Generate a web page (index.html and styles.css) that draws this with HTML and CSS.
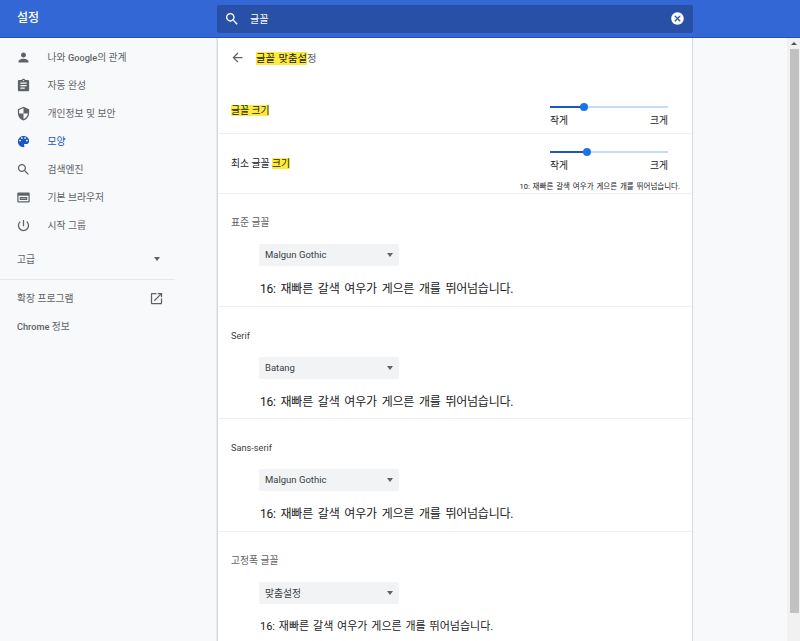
FILE: index.html
```html
<!DOCTYPE html>
<html lang="ko">
<head>
<meta charset="utf-8">
<title>설정</title>
<link rel="stylesheet" href="styles.css">
</head>
<body>
<header class="topbar">
  <h1 class="brand">설정</h1>
  <div class="search">
    <svg class="search-icon" viewBox="0 0 24 24"><path d="M15.5 14h-.79l-.28-.27C15.41 12.59 16 11.11 16 9.5 16 5.91 13.09 3 9.5 3S3 5.91 3 9.5 5.91 16 9.5 16c1.61 0 3.09-.59 4.23-1.57l.27.28v.79l5 4.99L20.49 19l-4.99-5zm-6 0C7.01 14 5 11.99 5 9.5S7.01 5 9.5 5 14 7.01 14 9.5 11.99 14 9.5 14z"/></svg>
    <span class="query">글꼴</span>
    <svg class="clear-icon" viewBox="0 0 24 24"><path d="M12 2C6.47 2 2 6.47 2 12s4.47 10 10 10 10-4.47 10-10S17.53 2 12 2zm5 13.59L15.59 17 12 13.41 8.41 17 7 15.59 10.59 12 7 8.41 8.41 7 12 10.59 15.59 7 17 8.41 13.41 12 17 15.59z"/></svg>
  </div>
</header>
<div class="layout">
  <nav class="sidebar">
    <a class="nav-item"><svg class="icon" viewBox="0 0 24 24"><path d="M12 12c2.21 0 4-1.79 4-4s-1.79-4-4-4-4 1.79-4 4 1.79 4 4 4zm0 2c-2.67 0-8 1.34-8 4v2h16v-2c0-2.66-5.33-4-8-4z"/></svg><span>나와 <span class="latin">Google</span>의 관계</span></a>
    <a class="nav-item"><svg class="icon" viewBox="0 0 24 24"><path d="M19 3h-4.18C14.4 1.84 13.3 1 12 1c-1.3 0-2.4.84-2.82 2H5c-1.1 0-2 .9-2 2v14c0 1.1.9 2 2 2h14c1.1 0 2-.9 2-2V5c0-1.1-.9-2-2-2zm-7 0c.55 0 1 .45 1 1s-.45 1-1 1-1-.45-1-1 .45-1 1-1zm2 14H7v-2h7v2zm3-4H7v-2h10v2zm0-4H7V7h10v2z"/></svg><span>자동 완성</span></a>
    <a class="nav-item"><svg class="icon" viewBox="0 0 24 24"><path d="M12 1L3 5v6c0 5.55 3.84 10.74 9 12 5.16-1.26 9-6.45 9-12V5l-9-4zm0 10.99h7c-.53 4.12-3.28 7.79-7 8.94V12H5V6.3l7-3.11v8.8z"/></svg><span>개인정보 및 보안</span></a>
    <a class="nav-item active"><svg class="icon" viewBox="0 0 24 24"><path d="M12 3c-4.97 0-9 4.03-9 9s4.03 9 9 9c.83 0 1.5-.67 1.5-1.5 0-.39-.15-.74-.39-1.01-.23-.26-.38-.61-.38-.99 0-.83.67-1.5 1.5-1.5H16c2.76 0 5-2.24 5-5 0-4.42-4.03-8-9-8zm-5.5 9c-.83 0-1.5-.67-1.5-1.5S5.67 9 6.5 9 8 9.67 8 10.5 7.33 12 6.5 12zm3-4C8.67 8 8 7.33 8 6.5S8.67 5 9.5 5s1.5.67 1.5 1.5S10.33 8 9.5 8zm5 0c-.83 0-1.5-.67-1.5-1.5S13.67 5 14.5 5s1.5.67 1.5 1.5S15.33 8 14.5 8zm3 4c-.83 0-1.5-.67-1.5-1.5S16.67 9 17.5 9s1.5.67 1.5 1.5-.67 1.5-1.5 1.5z"/></svg><span>모양</span></a>
    <a class="nav-item"><svg class="icon" viewBox="0 0 24 24"><path d="M15.5 14h-.79l-.28-.27C15.41 12.59 16 11.11 16 9.5 16 5.91 13.09 3 9.5 3S3 5.91 3 9.5 5.91 16 9.5 16c1.61 0 3.09-.59 4.23-1.57l.27.28v.79l5 4.99L20.49 19l-4.99-5zm-6 0C7.01 14 5 11.99 5 9.5S7.01 5 9.5 5 14 7.01 14 9.5 11.99 14 9.5 14z"/></svg><span>검색엔진</span></a>
    <a class="nav-item"><svg class="icon" viewBox="0 0 24 24"><path d="M20 4H4c-1.1 0-2 .9-2 2v12c0 1.1.9 2 2 2h16c1.1 0 2-.9 2-2V6c0-1.1-.9-2-2-2zm0 14H4v-9h16v9zm-2-7H6v5h12v-5zm-2 3H8v-1h8v1z"/></svg><span>기본 브라우저</span></a>
    <a class="nav-item"><svg class="icon" viewBox="0 0 24 24"><path d="M13 3h-2v10h2V3zm4.83 2.17l-1.42 1.42C17.99 7.86 19 9.81 19 12c0 3.87-3.13 7-7 7s-7-3.13-7-7c0-2.19 1.01-4.14 2.58-5.42L6.17 5.17C4.23 6.82 3 9.26 3 12c0 4.97 4.03 9 9 9s9-4.03 9-9c0-2.74-1.23-5.18-3.17-6.83z"/></svg><span>시작 그룹</span></a>
    <div class="advanced"><span>고급</span><i class="caret"></i></div>
    <div class="external"><span>확장 프로그램</span><svg class="icon" viewBox="0 0 24 24"><path d="M19 19H5V5h7V3H5c-1.11 0-2 .9-2 2v14c0 1.1.89 2 2 2h14c1.1 0 2-.9 2-2v-7h-2v7zM14 3v2h3.59l-9.83 9.83 1.41 1.41L19 6.41V10h2V3h-7z"/></svg></div>
    <div class="about"><span class="latin">Chrome</span> 정보</div>
  </nav>
  <main class="card">
    <div class="title-row">
      <svg class="back" viewBox="0 0 24 24"><path d="M20 11H7.83l5.59-5.59L12 4l-8 8 8 8 1.41-1.41L7.83 13H20v-2z"/></svg>
      <h2 class="title"><mark>글꼴 맞춤설</mark>정</h2>
    </div>
    <section class="size-row first">
      <div class="size-label"><mark>글꼴 크기</mark></div>
      <div class="slider-box">
        <div class="track"><div class="fill fill-a"></div><div class="thumb"></div></div>
        <div class="ends"><span>작게</span><span>크게</span></div>
      </div>
    </section>
    <section class="size-row second">
      <div class="size-label">최소 글꼴 <mark>크기</mark></div>
      <div class="slider-box">
        <div class="track"><div class="fill fill-b"></div><div class="thumb"></div></div>
        <div class="ends"><span>작게</span><span>크게</span></div>
      </div>
      <p class="mini-sample">10: 재빠른 갈색 여우가 게으른 개를 뛰어넘습니다.</p>
    </section>
    <section class="font-block">
      <div class="font-label">표준 글꼴</div>
      <div class="select"><span class="option">Malgun Gothic</span><i class="caret"></i></div>
      <p class="sample">16: 재빠른 갈색 여우가 게으른 개를 뛰어넘습니다.</p>
    </section>
    <section class="font-block mid">
      <div class="font-label name">Serif</div>
      <div class="select"><span class="option">Batang</span><i class="caret"></i></div>
      <p class="sample">16: 재빠른 갈색 여우가 게으른 개를 뛰어넘습니다.</p>
    </section>
    <section class="font-block">
      <div class="font-label name">Sans-serif</div>
      <div class="select"><span class="option">Malgun Gothic</span><i class="caret"></i></div>
      <p class="sample">16: 재빠른 갈색 여우가 게으른 개를 뛰어넘습니다.</p>
    </section>
    <section class="font-block last">
      <div class="font-label">고정폭 글꼴</div>
      <div class="select"><span>맞춤설정</span><i class="caret"></i></div>
      <p class="sample mono">16: 재빠른 갈색 여우가 게으른 개를 뛰어넘습니다.</p>
    </section>
  </main>
  <div class="gutter"></div>
  <div class="scrollbar">
    <div class="arrow"><i class="arrow-up"></i></div>
    <div class="scroll-thumb"></div>
  </div>
</div>
</body>
</html>
```
FILE: styles.css
```css
* { box-sizing: border-box; }
html, body { margin: 0; height: 641px; overflow: hidden; }
body {
  font-family: Roboto, "Noto Sans CJK KR", sans-serif;
  font-size: 9.8px;
  color: #202124;
  background: #f8f9fa;
}
mark { background: #ffeb3b; color: #202124; }
p, h1, h2 { margin: 0; font-weight: 400; }
.latin { font-size: 9.2px; font-weight: 500; }
.option { font-size: 9.5px; }

.topbar {
  height: 38px;
  background: #3367d6;
  border-bottom: 1px solid #1f51b8;
  display: flex;
  align-items: flex-start;
  padding: 5px 0 0 17px;
}
.brand { width: 200px; height: 28px; line-height: 27px; font-size: 12px; font-weight: 500; color: #fff; }
.search {
  width: 476px;
  height: 28px;
  background: #2850a7;
  border-radius: 2px;
  display: flex;
  align-items: center;
  padding: 0 8px 1px 7px;
  color: #fff;
}
.search-icon { width: 16px; height: 16px; fill: #fff; }
.query { margin-left: 10px; flex: 1; font-size: 10px; }
.clear-icon { width: 15px; height: 15px; fill: #fff; }

.layout { display: flex; height: 603px; }
.sidebar { width: 217px; padding-top: 5px; color: #5f6368; flex: none; }
.nav-item { height: 28px; display: flex; align-items: center; padding-left: 16px; }
.nav-item > span { margin-left: 16.5px; }
.icon { width: 15px; height: 15px; fill: #5f6368; flex: none; }
.nav-item.active, .nav-item.active span { color: #1a56c4; }
.nav-item.active .icon { fill: #1a56c4; }

.advanced {
  width: 175px;
  height: 41px;
  padding: 0 15px 0 17px;
  border-bottom: 1px solid #e6e7e9;
  display: flex;
  align-items: center;
  justify-content: space-between;
}
.advanced span { margin-top: -1px; }
.caret {
  width: 0;
  height: 0;
  border-left: 3.5px solid transparent;
  border-right: 3.5px solid transparent;
  border-top: 4px solid #5f6368;
}
.external {
  width: 175px;
  height: 36px;
  padding: 0 11px 0 17px;
  display: flex;
  align-items: center;
  justify-content: space-between;
}
.about { padding: 4px 0 0 17px; line-height: 14px; }

.card {
  width: 476px;
  height: 603px;
  overflow: hidden;
  flex: none;
  background: #fff;
  border-left: 1px solid #d9dadc;
  border-right: 1px solid #d9dadc;
  box-shadow: -1px 0 0 #e8e9eb;
}
.title-row { height: 39px; display: flex; align-items: center; padding-left: 12px; }
.back { width: 15px; height: 15px; fill: #5f6368; }
.title { margin-left: 11px; font-size: 10.3px; word-spacing: 1px; color: #5f6368; }

.size-row {
  position: relative;
  border-bottom: 1px solid #eff0f1;
  padding-left: 13px;
  display: flex;
  justify-content: space-between;
}
.size-row.first { height: 57px; padding-top: 26px; }
.size-row.second { height: 60px; padding-top: 22px; }
.size-label { line-height: 16px; height: 16px; }
.slider-box { width: 118px; margin-right: 24px; }
.first .slider-box { margin-top: 1px; }
.second .slider-box { margin-top: -7px; }
.track { position: relative; height: 2px; margin-top: 2px; background: #c6dafc; }
.fill { height: 2px; background: #1a56c4; }
.fill-a { width: 34px; }
.fill-b { width: 37px; }
.thumb {
  position: absolute;
  top: -3px;
  width: 8px;
  height: 8px;
  border-radius: 50%;
  background: #1a73e8;
}
.fill-a + .thumb { left: 30px; }
.fill-b + .thumb { left: 33px; }
.ends { display: flex; justify-content: space-between; margin-top: 6px; line-height: 14px; }
.mini-sample {
  position: absolute;
  right: 12px;
  top: 47px;
  font-size: 7.5px;
  line-height: 11px;
  word-spacing: 1px;
  white-space: nowrap;
}

.font-block { height: 113px; padding: 21px 0 0 13px; border-bottom: 1px solid #eff0f1; }
.font-block.mid { height: 112px; }
.font-block.last { border-bottom: 0; }
.font-label { height: 16px; line-height: 16px; color: #5f6368; }
.font-label.name { font-size: 9.2px; color: #3c4043; }
.select {
  width: 140px;
  height: 22px;
  margin: 13px 0 0 28px;
  padding: 0 6px 1px;
  background: #f1f3f4;
  border-radius: 2px;
  display: flex;
  align-items: center;
  justify-content: space-between;
  color: #3c4043;
}
.sample {
  margin: 14px 0 0 29px;
  font-size: 12px;
  line-height: 18px;
  white-space: nowrap;
  letter-spacing: -0.25px;
  word-spacing: 2.2px;
}
.sample.mono { font-size: 11px; letter-spacing: 0; word-spacing: 1.1px; }

.gutter { flex: 1; }
.scrollbar { width: 13px; height: 603px; background: #f1f1f1; flex: none; }
.arrow { height: 11px; display: flex; align-items: center; justify-content: center; }
.arrow-up {
  width: 0;
  height: 0;
  border-left: 3px solid transparent;
  border-right: 3px solid transparent;
  border-bottom: 3px solid #505050;
}
.scroll-thumb { width: 9px; height: 564px; margin-left: 3px; background: #c1c1c1; }
```
